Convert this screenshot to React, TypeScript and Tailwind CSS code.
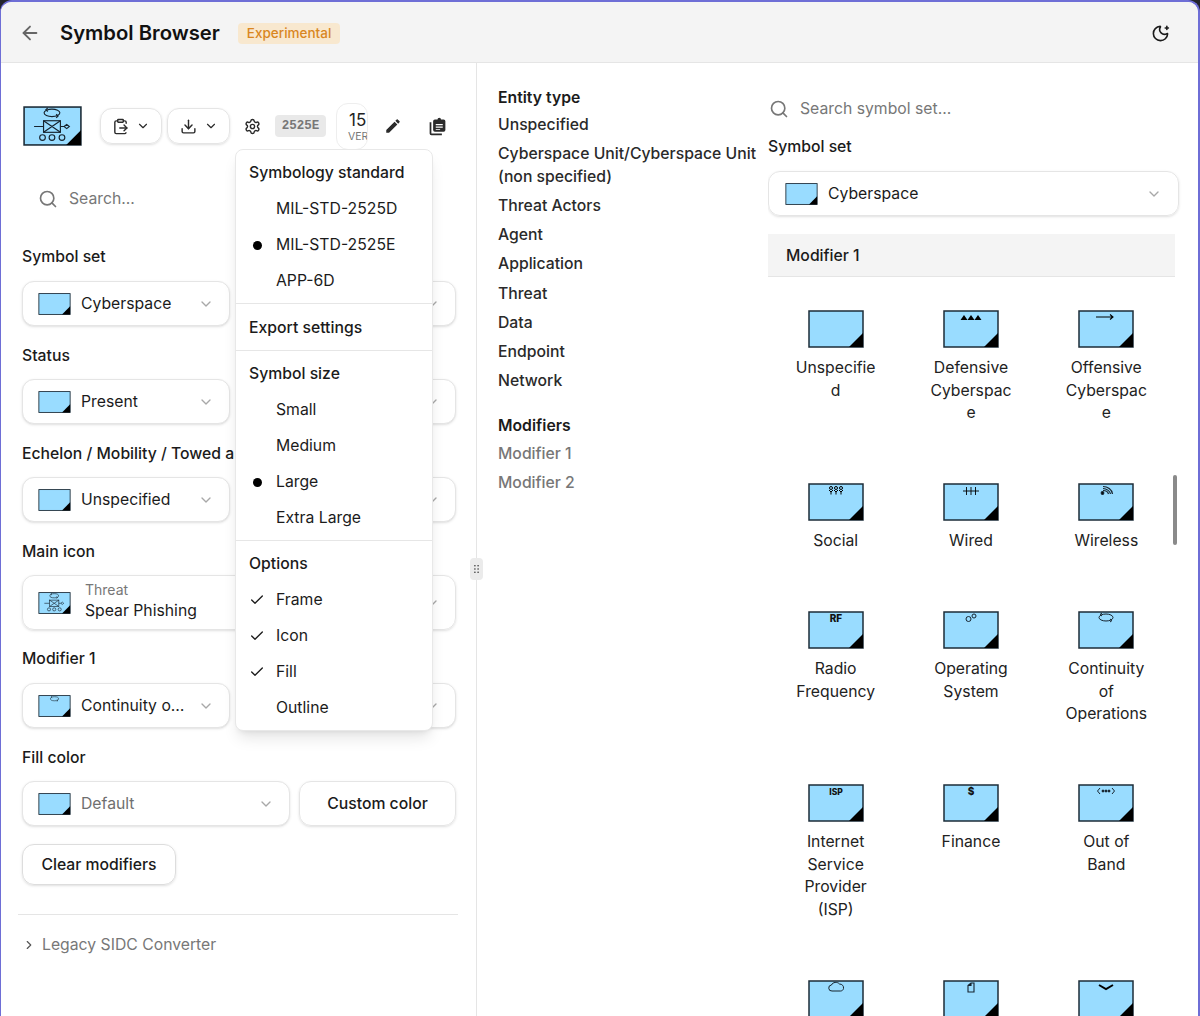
import type { ReactNode } from 'react';
import {
  ArrowLeft,
  Check,
  ChevronDown,
  ChevronRight,
  ClipboardPaste,
  Download,
  MoonStar,
  Search,
  Settings,
} from 'lucide-react';
import { MdEdit } from 'react-icons/md';

function Frame({ glyph, className }: { glyph?: ReactNode; className?: string }) {
  return (
    <svg viewBox="0 0 56 38" className={className}>
      <rect x="1" y="1" width="54" height="36" fill="#99dcff" stroke="#1c2c38" strokeWidth="1.5" />
      <path d="M55 37H41L55 23Z" fill="#000" />
      {glyph}
    </svg>
  );
}

const glyphs: Record<string, ReactNode> = {
  defensive: <path d="M17.500 10l3.500-5 3.500 5zM24.500 10l3.500-5 3.500 5zM31.500 10l3.500-5 3.500 5z" fill="#000" />,
  offensive: (
    <g fill="none" stroke="#000" strokeWidth="1.100">
      <path d="M18 7h17M32 4.500l3 2.500-3 2.500" />
    </g>
  ),
  social: (
    <g fill="none" stroke="#000" strokeWidth="1">
      <circle cx="23" cy="5" r="1.500" />
      <circle cx="28" cy="5" r="1.500" />
      <circle cx="33" cy="5" r="1.500" />
      <path d="M21 7l2 2 2-2M23 8.500v3M26 7l2 2 2-2M28 8.500v3M31 7l2 2 2-2M33 8.500v3" />
    </g>
  ),
  wired: (
    <g fill="none" stroke="#000" strokeWidth="0.900">
      <path d="M20 8h16M23.500 4v8M28 4v8M32.500 4v8" />
    </g>
  ),
  wireless: (
    <g fill="none" stroke="#17242f" strokeWidth="1.200">
      <circle cx="24.500" cy="10" r="1.300" fill="#000" />
      <path d="M25 7.500c2.500 0 5 1.500 5.500 3.500M25 5.500c3.500 0 7 2.500 7.500 5.500M25 3.500c4.500 0 9 3 9.500 7.500" />
    </g>
  ),
  rf: (
    <text x="28" y="11" textAnchor="middle" fontSize="10" fontWeight="800" fontFamily="Inter, sans-serif" fill="#111">
      RF
    </text>
  ),
  os: (
    <g fill="none" stroke="#17242f" strokeWidth="1">
      <circle cx="25.500" cy="8" r="2.500" />
      <circle cx="31" cy="5" r="2" />
    </g>
  ),
  continuity: (
    <g fill="none" stroke="#17242f" strokeWidth="1">
      <ellipse cx="28" cy="6.500" rx="7" ry="3.500" />
      <path d="M24 2l-2 1.500 2 1.500M32 8l2 1.500-2 1.500" />
    </g>
  ),
  isp: (
    <text x="28" y="10.500" textAnchor="middle" fontSize="8.500" fontWeight="800" fontFamily="Inter, sans-serif" fill="#111">
      ISP
    </text>
  ),
  finance: (
    <text x="28" y="11" textAnchor="middle" fontSize="10" fontWeight="800" fontFamily="Inter, sans-serif" fill="#111">
      $
    </text>
  ),
  band: (
    <g fill="none" stroke="#17242f" strokeWidth="1">
      <path d="M22 4l-2.500 3 2.500 3M34 4l2.500 3-2.500 3" />
      <circle cx="25" cy="7" r="1" fill="#000" />
      <circle cx="28" cy="7" r="1" fill="#000" />
      <circle cx="31" cy="7" r="1" fill="#000" />
    </g>
  ),
  cloud: <path d="M24 11a3 3 0 0 1-.500-6c1-3 6-3.500 8-1 2.500 0 4.500 2 4 4.500-.300 1.500-1.500 2.500-3 2.500z" fill="none" stroke="#17242f" strokeWidth="1" />,
  file: <path d="M25 5.500L28 3h3v9h-6zM25 5.500h3V3" fill="none" stroke="#17242f" strokeWidth="1.100" />,
  chevron: <path d="M21 5l7 4 7-4" fill="none" stroke="#000" strokeWidth="2" />,
};

const phishing = (
  <g fill="none" stroke="#17242f" strokeWidth="1.100">
    <ellipse cx="27.500" cy="6.500" rx="7.500" ry="3.600" />
    <path d="M23.500 1.800l-1.800 1.700 1.800 1.700M31.500 7.800l1.800 1.700-1.800 1.700" />
    <rect x="19.500" y="14" width="16" height="11" />
    <path d="M19.500 14l8 5.500 8-5.500M19.500 25l8-5.500 8 5.500M10.500 19.500h9M35.500 19.500h3.500" />
    <path d="M39 19.500l2.500-2 2.500 2-2.500 2z" />
    <circle cx="18.500" cy="30" r="2.700" />
    <circle cx="27.500" cy="30" r="2.700" />
    <circle cx="37" cy="30" r="2.700" />
  </g>
);

const symbols: { id: string; label?: string; glyph?: string }[] = [
  { id: 'unspecified', label: 'Unspecified' },
  { id: 'defensive', label: 'Defensive Cyberspace', glyph: 'defensive' },
  { id: 'offensive', label: 'Offensive Cyberspace', glyph: 'offensive' },
  { id: 'social', label: 'Social', glyph: 'social' },
  { id: 'wired', label: 'Wired', glyph: 'wired' },
  { id: 'wireless', label: 'Wireless', glyph: 'wireless' },
  { id: 'rf', label: 'Radio Frequency', glyph: 'rf' },
  { id: 'os', label: 'Operating System', glyph: 'os' },
  { id: 'continuity', label: 'Continuity of Operations', glyph: 'continuity' },
  { id: 'isp', label: 'Internet Service Provider (ISP)', glyph: 'isp' },
  { id: 'finance', label: 'Finance', glyph: 'finance' },
  { id: 'band', label: 'Out of Band', glyph: 'band' },
  { id: 'cloud', glyph: 'cloud' },
  { id: 'file', glyph: 'file' },
  { id: 'chevron', glyph: 'chevron' },
];

function Select({ label, glyph, muted, className }: { label?: string; glyph?: ReactNode; muted?: boolean; className?: string }) {
  return (
    <div className={`h-[45px] flex items-center pl-[15px] pr-[15px] bg-white border border-[#e5e5e5] rounded-xl shadow-sm ${className ?? ''}`}>
      <Frame glyph={glyph} className="w-[33px] h-[22px] shrink-0" />
      <span className={`ml-[10px] mr-[8px] flex-1 truncate ${muted ? 'text-[#6f6f6f]' : 'text-[#1b1b1b]'}`}>{label}</span>
      <ChevronDown className="w-4 h-4 text-[#a8a8a8] shrink-0" />
    </div>
  );
}

function FieldLabel({ children, className }: { children: ReactNode; className?: string }) {
  return <div className={`font-medium text-[#1b1b1b] leading-6 whitespace-nowrap ${className ?? ''}`}>{children}</div>;
}

function MenuItem({ label, mark }: { label: string; mark?: 'dot' | 'check' }) {
  return (
    <div className="h-9 flex items-center text-[#1b1b1b]">
      <span className="w-[40px] flex justify-center shrink-0 pl-[2px]">
        {mark === 'dot' && <span className="w-[9px] h-[9px] rounded-full bg-black" />}
        {mark === 'check' && <Check className="w-4 h-4" />}
      </span>
      {label}
    </div>
  );
}

function MenuHeading({ children }: { children: ReactNode }) {
  return <div className="h-9 flex items-center pl-[13px] font-medium text-[#1b1b1b]">{children}</div>;
}

function SettingsMenu() {
  return (
    <div className="absolute left-[234px] top-[86px] w-[198px] h-[582px] bg-white border border-[#e8e8e8] rounded-lg shadow-lg pt-[5px] z-10">
      <MenuHeading>Symbology standard</MenuHeading>
      <MenuItem label="MIL-STD-2525D" />
      <MenuItem label="MIL-STD-2525E" mark="dot" />
      <MenuItem label="APP-6D" />
      <div className="h-px bg-[#e6e6e6] mt-[4px] mb-[6px]" />
      <MenuHeading>Export settings</MenuHeading>
      <div className="h-px bg-[#e6e6e6] mt-[4px] mb-[5px]" />
      <MenuHeading>Symbol size</MenuHeading>
      <MenuItem label="Small" />
      <MenuItem label="Medium" />
      <MenuItem label="Large" mark="dot" />
      <MenuItem label="Extra Large" />
      <div className="h-px bg-[#e6e6e6] mt-[4px] mb-[5px]" />
      <MenuHeading>Options</MenuHeading>
      <MenuItem label="Frame" mark="check" />
      <MenuItem label="Icon" mark="check" />
      <MenuItem label="Fill" mark="check" />
      <MenuItem label="Outline" />
    </div>
  );
}

function ClipboardStack() {
  return (
    <svg viewBox="0 0 24 24" className="w-[21px] h-[21px] text-[#2b2b2b]" fill="currentColor">
      <path d="M3 7h2v13h12v2H5a2 2 0 0 1-2-2z" />
      <path d="M9 4h3a2 2 0 0 1 4 0h3a2 2 0 0 1 2 2v10a2 2 0 0 1-2 2H9a2 2 0 0 1-2-2V6a2 2 0 0 1 2-2zm1 5v1.500h8V9zm0 3v1.500h8V12zm0 3v1h5v-1z" fillRule="evenodd" />
    </svg>
  );
}

function LeftPanel() {
  return (
    <div className="relative w-[476px] shrink-0 border-r border-[#e5e5e5] pl-[21px] pr-[20px] overflow-hidden">
      <SettingsMenu />
      <div className="flex items-center h-[48px] mt-[39px]">
        <Frame glyph={phishing} className="w-[59px] h-[40px] shrink-0 ml-[1px]" />
        <div className="ml-[18px] w-[62px] h-9 flex items-center justify-center gap-[7px] border border-[#e5e5e5] rounded-xl shadow-sm">
          <ClipboardPaste className="w-[17px] h-[17px] text-[#2b2b2b]" />
          <ChevronDown className="w-[14px] h-[14px] text-[#2b2b2b]" />
        </div>
        <div className="ml-[5px] w-[63px] h-9 flex items-center justify-center gap-[7px] border border-[#e5e5e5] rounded-xl shadow-sm">
          <Download className="w-[17px] h-[17px] text-[#2b2b2b]" />
          <ChevronDown className="w-[14px] h-[14px] text-[#2b2b2b]" />
        </div>
        <Settings className="ml-[14px] w-[17px] h-[17px] text-[#2b2b2b] shrink-0" />
        <div className="ml-[14px] w-[51px] h-[22px] rounded bg-[#e9e9e9] text-[#777] text-[12.500px] font-bold flex items-center justify-center font-['Liberation_Mono',monospace]">
          2525E
        </div>
        <div className="ml-[10px] w-8 h-[47px] border border-[#eeeeee] rounded-xl overflow-hidden flex flex-col shrink-0 pl-3 whitespace-nowrap">
          <span className="text-[17px] leading-[20px] mt-[6px] text-[#222]">15</span>
          <span className="text-[10.500px] leading-[14px] text-[#777] -ml-px">VER</span>
        </div>
        <MdEdit className="ml-[16px] w-[18px] h-[18px] text-[#2b2b2b] shrink-0" />
        <div className="ml-[25px] shrink-0">
          <ClipboardStack />
        </div>
      </div>

      <div className="flex items-center h-[40px] mt-[29px] pl-[16px] text-[#777]">
        <Search className="w-[20px] h-[20px] mr-[11px]" />
        Search...
      </div>

      <FieldLabel className="mt-[26px] mb-[12px]">Symbol set</FieldLabel>
      <div className="grid grid-cols-[208px_1fr] gap-2">
        <Select label="Cyberspace" />
        <Select />
      </div>
      <FieldLabel className="mt-[18px] mb-[11px]">Status</FieldLabel>
      <div className="grid grid-cols-[208px_1fr] gap-2">
        <Select label="Present" />
        <Select />
      </div>
      <FieldLabel className="mt-[18px] mb-[11px]">Echelon / Mobility / Towed a</FieldLabel>
      <div className="grid grid-cols-[208px_1fr] gap-2">
        <Select label="Unspecified" />
        <Select />
      </div>
      <FieldLabel className="mt-[18px] mb-[11px]">Main icon</FieldLabel>
      <div className="h-[55px] flex items-center pl-[15px] pr-[15px] border border-[#e5e5e5] rounded-xl shadow-sm">
        <Frame glyph={phishing} className="w-[33px] h-[22px] shrink-0" />
        <div className="ml-[14px] flex-1 pt-[2px]">
          <div className="text-sm leading-[15px] text-[#777]">Threat</div>
          <div className="leading-[28px] text-[#1b1b1b]">Spear Phishing</div>
        </div>
        <ChevronDown className="w-4 h-4 text-[#a8a8a8]" />
      </div>
      <FieldLabel className="mt-[17px] mb-[12px]">Modifier 1</FieldLabel>
      <div className="grid grid-cols-[208px_1fr] gap-2">
        <Select label="Continuity of Operations" glyph={glyphs.continuity} />
        <Select />
      </div>
      <FieldLabel className="mt-[18px] mb-[11px]">Fill color</FieldLabel>
      <div className="flex gap-[9px]">
        <Select label="Default" muted className="w-[268px]" />
        <div className="flex-1 h-[45px] flex items-center justify-center font-medium text-[#1b1b1b] border border-[#e5e5e5] rounded-xl shadow-sm">
          Custom color
        </div>
      </div>
      <div className="mt-[18px] w-[154px] h-[41px] flex items-center justify-center font-medium text-[#1b1b1b] border border-[#dddddd] rounded-xl shadow-sm">
        Clear modifiers
      </div>
      <div className="h-px bg-[#e5e5e5] mt-[29px] -ml-[4px] -mr-[2px]" />
      <div className="flex items-center mt-[18px] leading-6 text-[#777]">
        <ChevronRight className="w-[14px] h-[14px] mr-[6px] text-[#555]" />
        Legacy SIDC Converter
      </div>
    </div>
  );
}

function EntityList() {
  const rows = [
    'Unspecified',
    'Cyberspace Unit/Cyberspace Unit (non specified)',
    'Threat Actors',
    'Agent',
    'Application',
    'Threat',
    'Data',
    'Endpoint',
    'Network',
  ];
  return (
    <div className="w-[291px] shrink-0 pl-[21px] pr-[10px] pt-[25px] text-[#1b1b1b]">
      <div className="font-semibold leading-[20px]">Entity type</div>
      <div className="mt-[2.500px]">
        {rows.map(r => (
          <div key={r} className="py-[3.375px] leading-[22.500px] font-medium text-[#2a2a2a]">{r}</div>
        ))}
      </div>
      <div className="font-semibold leading-[24px] mt-[17.500px]">Modifiers</div>
      <div className="mt-[1px] font-medium text-[#777]">
        <div className="py-[3px] leading-[23px]">Modifier 1</div>
        <div className="py-[3px] leading-[23px]">Modifier 2</div>
      </div>
    </div>
  );
}

function SymbolGrid() {
  return (
    <div className="flex-1 pr-[19px] pt-[26px] overflow-hidden">
      <div className="flex items-center h-[40px] text-[#777]">
        <Search className="w-[20px] h-[20px] mr-[11px] ml-[1px]" />
        Search symbol set...
      </div>
      <div className="font-medium text-[#1b1b1b] leading-6 mt-[6px]">Symbol set</div>
      <div className="mt-[12px] h-[45px] flex items-center pl-4 pr-4 border border-[#e5e5e5] rounded-xl shadow-sm">
        <Frame className="w-[33px] h-[22px]" />
        <span className="ml-[10px] flex-1 text-[#1b1b1b]">Cyberspace</span>
        <ChevronDown className="w-4 h-4 text-[#a8a8a8]" />
      </div>
      <div className="mt-[18px] h-[43px] w-[407px] bg-[#f4f4f4] border-b border-[#e5e5e5] flex items-center pl-[18px] pt-px font-medium text-[#1b1b1b]">
        Modifier 1
      </div>
      <div className="grid grid-cols-3 w-[406px] mt-[33px]">
        {symbols.map(s => (
          <div key={s.id} className="flex flex-col items-center pb-[58.500px]">
            <Frame glyph={s.glyph ? glyphs[s.glyph] : undefined} className="w-[56px] h-[38px]" />
            {s.label && <div className="mt-[9px] w-[84px] text-center leading-[22.500px] break-words text-[#222]">{s.label}</div>}
          </div>
        ))}
      </div>
    </div>
  );
}

export default function App() {
  return (
    <div className="h-[1016px] w-[1200px] bg-[#23242b] overflow-hidden font-['Inter',sans-serif] text-[15.750px]">
      <div className="h-full flex flex-col bg-white border-t-2 border-l border-r-2 border-[#6e6ed6] rounded-t-xl overflow-hidden">
        <div className="h-[61px] shrink-0 flex items-center bg-[#f4f4f4] border-b border-[#e5e5e5] pl-[18px] pr-[28px] pt-[2px]">
          <ArrowLeft className="w-[22px] h-[22px] text-[#666]" />
          <h1 className="ml-[19px] text-[20.250px] font-semibold text-[#111]">Symbol Browser</h1>
          <span className="ml-[18px] h-[21px] px-[9px] flex items-center rounded bg-[#f8e8cf] text-[13.500px] font-medium text-[#d9861f]">
            Experimental
          </span>
          <MoonStar className="ml-auto w-[19px] h-[19px] text-[#1b1b1b]" />
        </div>
        <div className="relative flex-1 flex min-h-0">
          <LeftPanel />
          <div className="absolute left-[469px] top-[495px] w-[13px] h-[22px] bg-[#ebebeb] rounded-sm flex items-center justify-center z-10">
            <svg viewBox="0 0 6 10" className="w-[5px] h-[8px]" fill="#333">
              <circle cx="1" cy="1" r="1" /><circle cx="5" cy="1" r="1" />
              <circle cx="1" cy="5" r="1" /><circle cx="5" cy="5" r="1" />
              <circle cx="1" cy="9" r="1" /><circle cx="5" cy="9" r="1" />
            </svg>
          </div>
          <div className="flex-1 flex min-w-0">
            <EntityList />
            <SymbolGrid />
          </div>
          <div className="absolute right-[21px] top-[412px] w-[4px] h-[70px] rounded-full bg-[#8a8a8a]" />
        </div>
      </div>
    </div>
  );
}
